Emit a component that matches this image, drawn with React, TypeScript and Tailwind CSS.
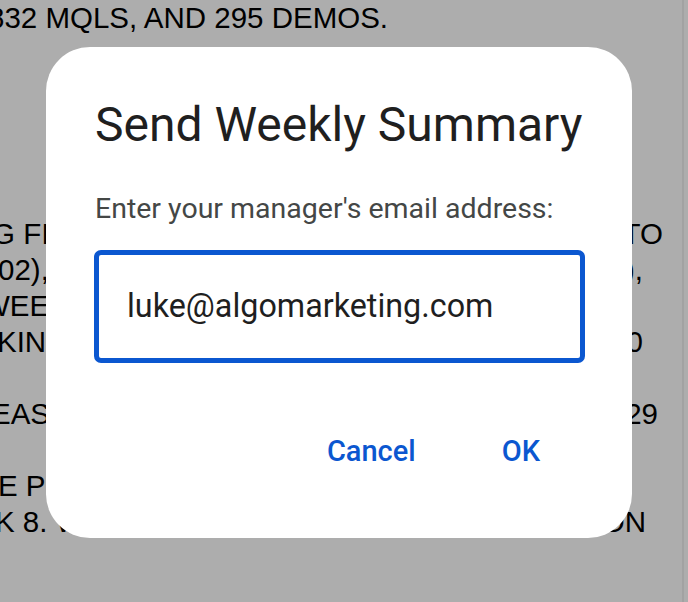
const lines: { left: string; leftOffset: string; right?: string; width?: string }[] = [
  { left: "832 MQLS, AND 295 DEMOS.", leftOffset: "-ml-[12px]" },
  { left: "\u00a0", leftOffset: "" },
  { left: "\u00a0", leftOffset: "" },
  { left: "\u00a0", leftOffset: "" },
  { left: "\u00a0", leftOffset: "" },
  { left: "\u00a0", leftOffset: "" },
  { left: "G FI", leftOffset: "-ml-[8px]", right: "TO", width: "w-[663px]" },
  { left: "02),", leftOffset: "-ml-[2px]", right: "),", width: "w-[643px]" },
  { left: "WEEK", leftOffset: "-ml-[18px]" },
  { left: "KING", leftOffset: "-ml-[3px]", right: "10", width: "w-[643px]" },
  { left: "\u00a0", leftOffset: "" },
  { left: "EASE", leftOffset: "-ml-[9px]", right: "29", width: "w-[658px]" },
  { left: "\u00a0", leftOffset: "" },
  { left: "E P", leftOffset: "-ml-[2px]" },
  { left: "K 8. W", leftOffset: "-ml-[5px]", right: "ON", width: "w-[646px]" },
];

function ReportText() {
  return (
    <div className="flex-1 overflow-hidden font-['Liberation_Sans',Arial,sans-serif] text-[29.5px] leading-[36px] text-black uppercase">
      {lines.map((line, i) => (
        <div key={i} className={`flex justify-between whitespace-nowrap ${line.width ?? ""}`}>
          <span className={line.leftOffset}>{line.left}</span>
          {line.right && <span>{line.right}</span>}
        </div>
      ))}
    </div>
  );
}

function PromptDialog() {
  return (
    <div className="absolute left-[46px] top-[47px] flex h-[491px] w-[586px] flex-col rounded-[44px] bg-white pl-[48px] pr-[20px] pt-[54px] font-['Roboto',sans-serif]">
      <h2 className="ml-[1px] whitespace-nowrap text-[48px] leading-[48px] font-normal text-[#1f1f1f]">Send Weekly Summary</h2>
      <p className="ml-[1px] mt-[46px] whitespace-nowrap text-[28.5px] leading-[28px] text-[#444746]">Enter your manager's email address:</p>
      <div className="mt-[27px] flex h-[113px] w-[491px] items-center rounded-[7px] border-[5px] border-[#0b57d0] pl-[28px]">
        <span className="text-[32.3px] leading-[33px] text-[#1f1f1f]">luke@algomarketing.com</span>
      </div>
      <div className="mt-[64px] flex justify-end gap-[62px] pr-[60px]">
        <button className="h-[48px] px-[12px] text-[29px] leading-[29px] font-medium text-[#0b57d0]">Cancel</button>
        <button className="h-[48px] px-[12px] text-[29px] leading-[29px] font-medium text-[#0b57d0]">OK</button>
      </div>
    </div>
  );
}

export default function App() {
  return (
    <div className="relative flex h-[602px] w-[688px] overflow-hidden bg-[#adadad]">
      <ReportText />
      <div className="w-[6px] border-l-2 border-[#a2a2a2]" />
      <PromptDialog />
    </div>
  );
}
